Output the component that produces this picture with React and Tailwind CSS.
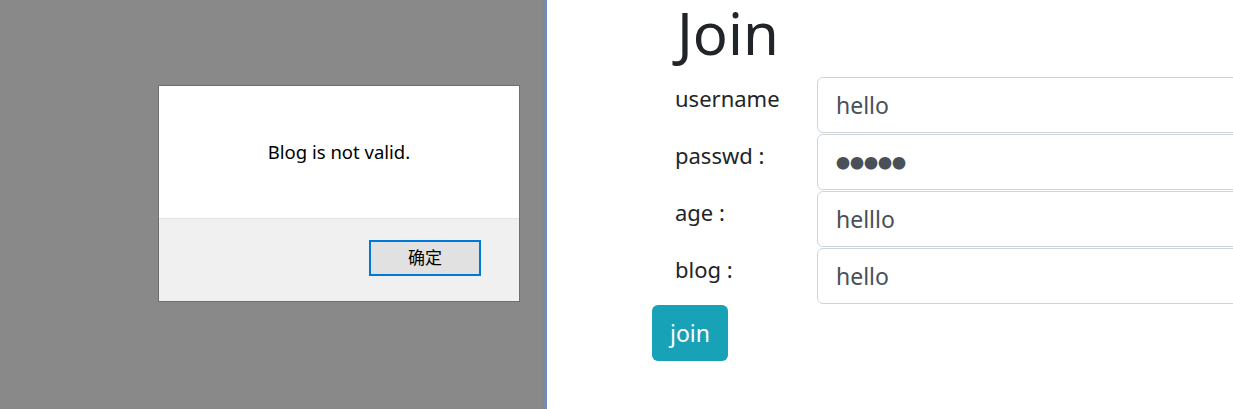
import React from "react";

const fields = [
  { label: "username", value: "hello" },
  { label: "passwd :", value: "●●●●●", secret: true },
  { label: "age :", value: "helllo" },
  { label: "blog :", value: "hello" },
];

function AlertDialog() {
  return (
    <div className="flex h-[217px] w-[362px] flex-col border border-[#6f6f6f] bg-white">
      <div className="flex h-[132px] items-center justify-center text-[18.5px] text-black">
        Blog is not valid.
      </div>
      <div className="flex flex-1 items-start justify-end border-t border-[#e3e3e3] bg-[#f0f0f0] pr-[38px] pt-[21px]">
        <button className="h-[36px] w-[112px] border-2 border-[#0078d7] bg-[#e1e1e1] text-[17px] text-black">
          确定
        </button>
      </div>
    </div>
  );
}

export default function App() {
  return (
    <div
      className="flex h-[409px] w-full overflow-hidden bg-white"
      style={{ fontFamily: '"Noto Sans", "Noto Sans CJK SC", sans-serif' }}
    >
      <div className="flex h-full w-[543px] shrink-0 bg-[#898989] pl-[158px] pt-[85px]">
        <AlertDialog />
      </div>
      <div className="h-full w-[4px] shrink-0 bg-gradient-to-r from-[#828790] to-[#6d8dc2]" />

      <div className="flex min-w-0 flex-1 flex-col pl-[105px]">
        <h1 className="ml-[25px] text-[58px] leading-[66px] text-[#212529]">Join</h1>

        <div className="mt-[11px] -mr-[12px] flex flex-col gap-px">
          {fields.map((f) => (
            <div key={f.label} className="flex">
              <div className="w-[165px] shrink-0 pl-[23px] pt-[5px] text-[22px] leading-[1.5] text-[#212529]">
                {f.label}
              </div>
              <div className="flex h-[56px] flex-1 items-center rounded-[6px] border border-[#ced4da] bg-white pl-[18px] text-[23px] text-[#495057]">
                {f.secret ? (
                  <span className="text-[14px]">{f.value}</span>
                ) : (
                  f.value
                )}
              </div>
            </div>
          ))}
        </div>

        <div className="mt-[1px]">
          <button className="h-[56px] rounded-[6px] bg-[#17a2b8] px-[18px] text-[23px] text-white">
            join
          </button>
        </div>
      </div>
    </div>
  );
}
